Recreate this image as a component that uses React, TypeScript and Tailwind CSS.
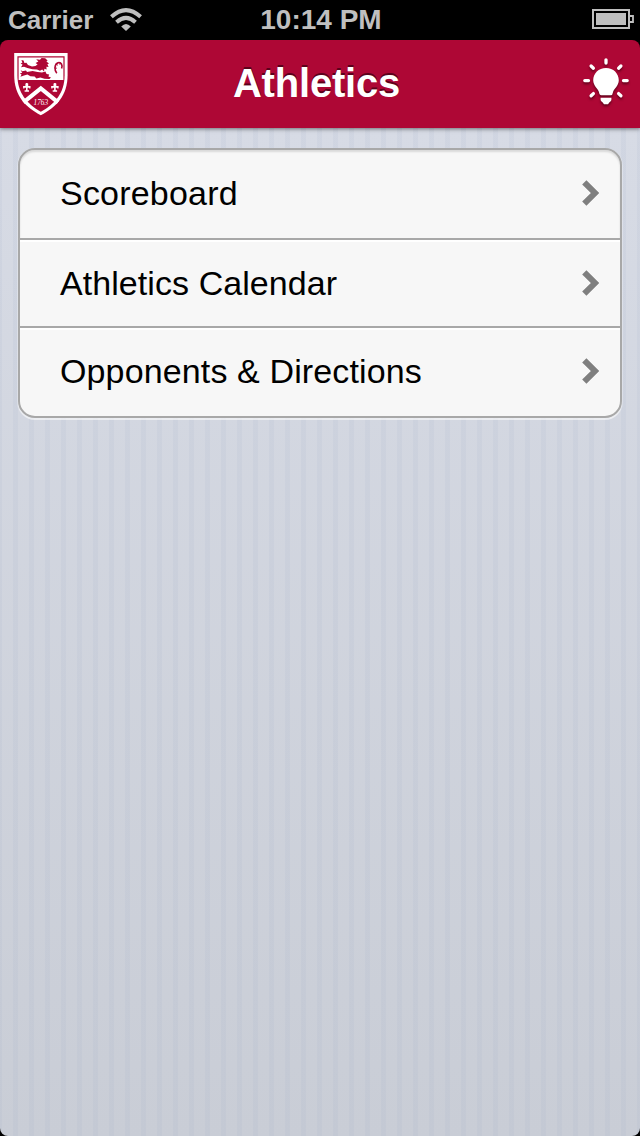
const items = [
  { label: 'Scoreboard', text: 'tracking-[0.2px]', row: 'h-[90px] pb-0.5 border-b-2 rounded-t-[15px] shadow-[inset_0_2px_2px_rgba(0,0,0,0.12)]' },
  { label: 'Athletics Calendar', text: 'tracking-[0.07px]', row: 'h-[88px] border-b-2 shadow-[inset_0_2px_0_#fff]' },
  { label: 'Opponents & Directions', text: 'tracking-[0.13px]', row: 'h-[88px] pb-0.5 shadow-[inset_0_2px_0_#fff]' },
];

function WifiIcon() {
  return (
    <svg className="ml-4 mt-[7px] h-[24px] w-[34px]" viewBox="0 0 34 24" fill="none" stroke="#bfbfbf">
      <path d="M2.4 9.8Q17 -3.6 31.6 9.8" strokeWidth="4" />
      <path d="M7.5 15.2Q17 6.6 26.5 15.2" strokeWidth="4" />
      <path d="M12.2 19.6Q17 14.6 21.8 19.6L17 24Z" fill="#bfbfbf" stroke="none" />
    </svg>
  );
}

function BatteryIcon() {
  return (
    <svg className="mr-[6px] mt-[9px] h-[20px] w-[42px]" viewBox="0 0 42 20">
      <path d="M1 1H37V19H1Z" fill="none" stroke="#bfbfbf" strokeWidth="2" />
      <path d="M4 4H34V16H4Z" fill="#bfbfbf" />
      <path d="M37 7H41V13H37" fill="none" stroke="#bfbfbf" strokeWidth="1.8" />
    </svg>
  );
}

function Shield() {
  return (
    <svg className="h-[64px] w-[56px]" viewBox="0 0 56 64">
      <path d="M1.2 1H54.6V23C54.6 44 43 55 27.8 63.2C12.5 55 1.2 44 1.2 23Z" fill="#fff" />
      <path d="M4.4 4.2H51.6V23C51.6 41 42 51.8 27.8 59.8C14 51.8 4.4 41 4.4 23Z" fill="#ae0735" />
      <path d="M5.6 5.4H50.4V28H5.6Z" fill="#fff" />
      <path d="M8.4 8L10.6 8.6L11.4 11L13.4 10.8L15 13L19 14.4L22.4 14L24.6 12.4L22.6 11L25.4 9.6L23.2 7.2L27 7.8L28.6 6L32.2 6.2L34.6 8.4L33.4 9.6L36 11.4L34.4 12.2L35.6 15L33.4 14.8L33.6 17.4L31.4 16.8L31 19.4L29.2 17.6L27 18.8L24 17.4L19.4 17.2L14.4 16L11 14.8L8 15.2L9.6 12.8L7.6 11.2L9.4 10.8Z" fill="#ae0735" />
      <path d="M7.6 18L9.4 19.2L13 18.6L14 20L19.6 19L24.6 20L29 20.4L32.4 19.6L33.6 22L36.2 22.6L35.4 24.4L38 25.6L36.4 27L31.4 26.8L27.4 25.4L23.4 26.4L21.6 24.6L17.4 24.2L14.4 22.6L11 23.4L7.4 24.8L8.6 22.4L6.8 21.6L9.2 20.8Z" fill="#ae0735" />
      <path d="M43.8 21.2C41.2 18.4 41.2 12.4 45 10.8C48.2 10 49.8 13 48.6 16.4" fill="none" stroke="#ae0735" strokeWidth="1.6" />
      <path d="M42.6 12L44.8 13.2M41.4 16L43.8 16.2M47.6 10.4L46.8 12.6" stroke="#ae0735" strokeWidth="1" />
      <path d="M10.5 50.4L27.8 36.4L45 50.4" fill="none" stroke="#fff" strokeWidth="4" />
      <g fill="none" stroke="#fff">
        <path d="M13.8 31V39.4M10.4 34.9H17.2M11.6 39H16" strokeWidth="1.6" />
        <path d="M13.8 31.6V35" strokeWidth="2.8" />
        <path d="M10.8 34V36.4M16.8 34V36.4" strokeWidth="1.2" />
        <path d="M41.9 31V39.4M38.5 34.9H45.3M39.7 39H44.1" strokeWidth="1.6" />
        <path d="M41.9 31.6V35" strokeWidth="2.8" />
        <path d="M38.9 34V36.4M44.9 34V36.4" strokeWidth="1.2" />
      </g>
      <text x="27.8" y="52.6" textAnchor="middle" textLength="14.5" lengthAdjust="spacingAndGlyphs" fill="#fff" fontFamily="Liberation Serif, serif" fontSize="8.6" fontStyle="italic">1763</text>
    </svg>
  );
}

function BulbIcon() {
  return (
    <svg className="mb-[4px] h-[50px] w-[48px] drop-shadow-[0_2px_1px_rgba(60,0,15,0.65)]" viewBox="0 0 48 50" fill="#fff">
      <path d="M24 11C31.4 11 36.8 16.5 36.8 23.2C36.8 29 31.6 32 31 35.2Q30.6 38.2 28.7 38.2H19.3Q17.4 38.2 17 35.2C16.4 32 11.2 29 11.2 23.2C11.2 16.5 16.6 11 24 11Z" />
      <path d="M18.6 40.8H29.4V42.6C29.4 44.1 28.2 44.6 27.5 45.2L26 47.2H22L20.5 45.2C19.8 44.6 18.6 44.1 18.6 42.6Z" />
      <path d="M24 2.8V6M9.1 9L11.4 11.2M38.9 9L36.6 11.2M2.8 23.6H6.5M41.5 23.6H45.2M9.1 38.8L11.4 36.6M38.9 38.8L36.6 36.6" fill="none" stroke="#fff" strokeWidth="3.3" strokeLinecap="round" />
    </svg>
  );
}

function Chevron() {
  return (
    <svg className="mr-[20px] h-[26px] w-[18px]" viewBox="0 0 18 26" fill="none" stroke="#7f7f7f" strokeWidth="6">
      <path d="M2.3 2.3L13 13L2.3 23.7" />
    </svg>
  );
}

export default function App() {
  return (
    <div className="flex h-[1136px] w-[640px] flex-col overflow-hidden bg-black font-['Liberation_Sans',Arial,sans-serif]">
      <div className="grid h-10 grid-cols-3 text-[#bfbfbf]">
        <div className="flex pl-2">
          <span className="text-[26px] font-bold leading-[40px]">Carrier</span>
          <WifiIcon />
        </div>
        <span className="pl-[2px] text-center text-[28px] font-bold leading-[40px]">10:14 PM</span>
        <div className="flex justify-end">
          <BatteryIcon />
        </div>
      </div>
      <div className="flex flex-1 flex-col overflow-hidden rounded-[8px]">
        <header className="z-10 flex h-[88px] items-center justify-between bg-[#ae0735] pl-[13px] pr-[10px] shadow-[0_1px_4px_rgba(0,0,0,0.5)]">
          <Shield />
          <h1 className="mb-0.5 mr-[18px] text-[40px] font-bold leading-[86px] tracking-[-0.2px] text-white [text-shadow:0_-2px_0_rgba(70,0,20,0.8)]">Athletics</h1>
          <BulbIcon />
        </header>
        <main className="flex-1 bg-[repeating-linear-gradient(90deg,rgba(150,165,195,0.1)_0px,rgba(150,165,195,0.1)_2px,transparent_2px,transparent_13px,rgba(150,165,195,0.1)_13px,rgba(150,165,195,0.1)_16px),linear-gradient(180deg,#d7dbe5,#c9cdd6)] px-[18px] pt-5">
          <ul className="overflow-hidden rounded-[17px] border-2 border-[#a8a8a8] bg-[#f7f7f7] shadow-[0_1px_0_1px_rgba(255,255,255,0.3),0_2px_0_rgba(255,255,255,0.4)]">
            {items.map((item) => (
              <li key={item.label} className={`flex items-center justify-between border-[#a8a8a8] pl-10 ${item.row}`}>
                <span className={`text-[34px] leading-[40px] text-black ${item.text}`}>{item.label}</span>
                <Chevron />
              </li>
            ))}
          </ul>
        </main>
      </div>
    </div>
  );
}
